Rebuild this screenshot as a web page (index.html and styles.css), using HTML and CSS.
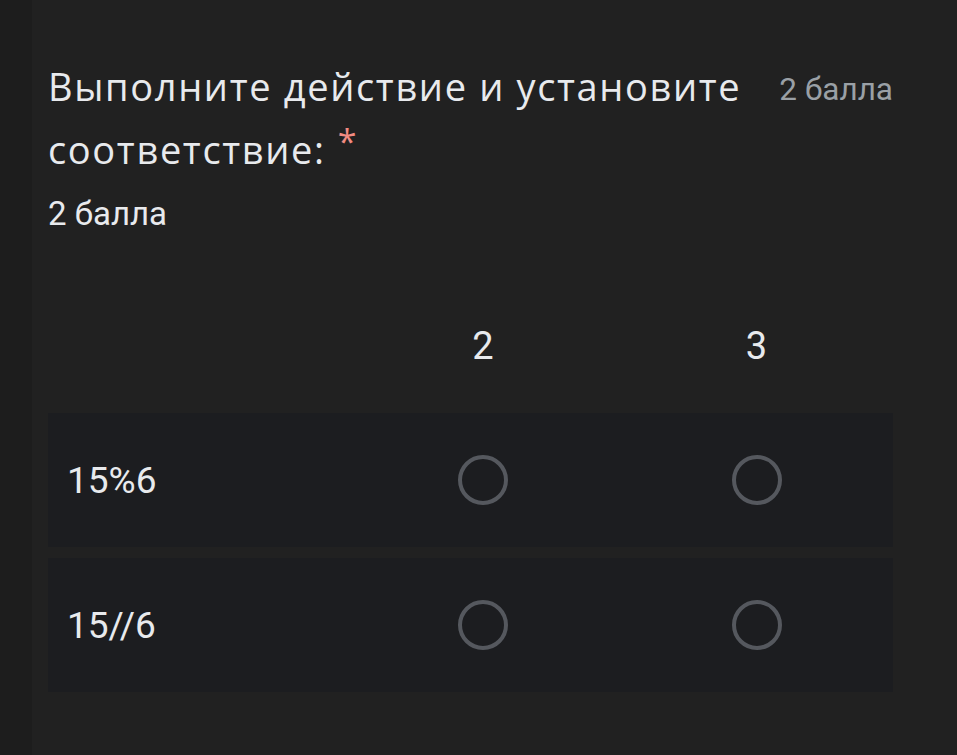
FILE: index.html
```html
<!DOCTYPE html>
<html lang="ru">
<head>
<meta charset="utf-8">
<link rel="stylesheet" href="styles.css">
</head>
<body>
<div class="page">
  <div class="card">
    <div class="q-head">
      <div class="q-title">Выполните действие и установите соответствие:<span class="req">*</span></div>
      <div class="q-points">2 балла</div>
    </div>
    <div class="q-desc">2 балла</div>
    <div class="grid">
      <div class="hdr-row">
        <div></div>
        <div class="col-h">2</div>
        <div class="col-h">3</div>
      </div>
      <div class="row">
        <div class="row-label">15%6</div>
        <div class="cell"><span class="radio"></span></div>
        <div class="cell"><span class="radio"></span></div>
      </div>
      <div class="row">
        <div class="row-label">15//6</div>
        <div class="cell"><span class="radio"></span></div>
        <div class="cell"><span class="radio"></span></div>
      </div>
    </div>
  </div>
</div>
</body>
</html>
```

FILE: styles.css
```css
html, body {
  margin: 0;
  padding: 0;
  background: #1d1d1d;
  height: 100%;
  overflow: hidden;
}
.page {
  padding-left: 32px;
  height: 100%;
}
.card {
  background: #212121;
  height: 100%;
  padding: 55px 64px 0 16px;
  box-sizing: border-box;
  color: #e8eaed;
  font-family: Roboto, "Noto Sans", sans-serif;
}
.q-head {
  display: flex;
  justify-content: space-between;
  align-items: flex-start;
}
.q-title {
  font-family: "Open Sans", sans-serif;
  font-size: 38px;
  line-height: 63px;
  width: 720px;
  letter-spacing: 1.65px;
}
.req {
  color: #f28b82;
  font-size: 34px;
  line-height: 34px;
  margin-left: 12px;
  vertical-align: 10px;
}
.q-points {
  font-size: 31.5px;
  line-height: 40px;
  color: #9aa0a6;
  margin-top: 15px;
}
.q-desc {
  font-size: 33px;
  line-height: 40px;
  margin-top: 13px;
}
.grid {
  margin-top: 87px;
  width: 845px;
}
.hdr-row, .row {
  display: grid;
  grid-template-columns: 298px 274px 273px;
  align-items: center;
}
.col-h {
  text-align: center;
  font-size: 38px;
  line-height: 50px;
}
.hdr-row {
  margin-bottom: 42px;
}
.row {
  background: #1c1d20;
  height: 134px;
  margin-bottom: 11px;
}
.row-label {
  padding-left: 19px;
  font-size: 37px;
}
.cell {
  display: flex;
  justify-content: center;
}
.radio {
  width: 42px;
  height: 42px;
  border: 4px solid #55585e;
  border-radius: 50%;
  display: block;
}
```
